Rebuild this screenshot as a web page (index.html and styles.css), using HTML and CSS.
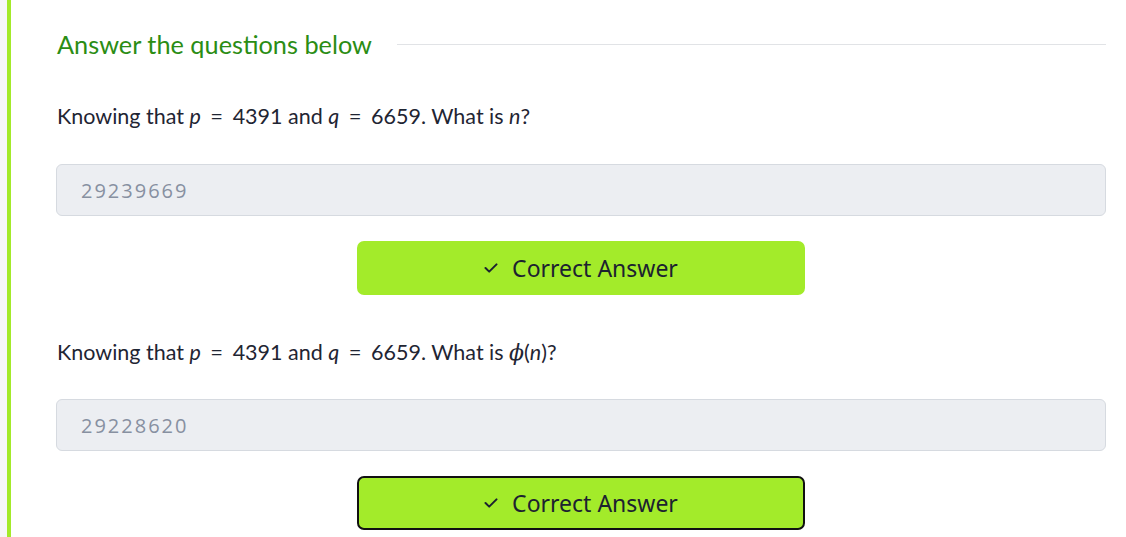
FILE: index.html
```html
<!DOCTYPE html>
<html>
<head>
<meta charset="utf-8">
<link rel="stylesheet" href="styles.css">
</head>
<body>
<div class="page">
  <div class="strip"></div>
  <div class="bar"></div>
  <main class="content">
    <div class="heading-row">
      <h2 class="heading">Answer the questions below</h2>
      <div class="rule"></div>
    </div>

    <section class="question">
      <p class="qtext">Knowing that <i class="m">p</i> <span class="eq">=</span> 4391 and <i class="m">q</i> <span class="eq">=</span> 6659. What is <i class="m">n</i>?</p>
      <div class="answer">29239669</div>
      <div class="btn-row">
        <button class="btn">
          <svg class="check" width="14" height="10" viewBox="0 0 14 10"><path d="M1.5 5 L5.2 8.6 L12.5 1.4" fill="none" stroke="#1c2230" stroke-width="2" stroke-linecap="round" stroke-linejoin="round"/></svg>
          <span>Correct Answer</span>
        </button>
      </div>
    </section>

    <section class="question q2">
      <p class="qtext">Knowing that <i class="m">p</i> <span class="eq">=</span> 4391 and <i class="m">q</i> <span class="eq">=</span> 6659. What is <i class="phi">ϕ</i>(<i class="m">n</i>)?</p>
      <div class="answer">29228620</div>
      <div class="btn-row">
        <button class="btn focused">
          <svg class="check" width="14" height="10" viewBox="0 0 14 10"><path d="M1.5 5 L5.2 8.6 L12.5 1.4" fill="none" stroke="#1c2230" stroke-width="2" stroke-linecap="round" stroke-linejoin="round"/></svg>
          <span>Correct Answer</span>
        </button>
      </div>
    </section>
  </main>
</div>
</body>
</html>
```

FILE: styles.css
```css
html, body {
  margin: 0;
  padding: 0;
  background: #ffffff;
}

body {
  font-family: "Lato", "Noto Sans", sans-serif;
  color: #1f2533;
}

.page {
  display: flex;
  min-height: 537px;
}

.strip {
  width: 7px;
  background: #f6f7f9;
  flex: none;
}

.bar {
  width: 4px;
  background: #a3ea2a;
  flex: none;
}

.content {
  flex: 1;
  padding: 26px 20px 0 45px;
}

.heading-row {
  display: flex;
  align-items: center;
  height: 36px;
  padding-left: 1px;
}

.heading {
  margin: 0;
  font-weight: 400;
  font-size: 25.3px;
  line-height: 36px;
  color: #2b8d14;
  white-space: nowrap;
}

.rule {
  flex: 1;
  height: 1px;
  background: #e1e3e6;
  margin-left: 25px;
}

.question {
  margin-top: 39px;
}

.q2 {
  margin-top: 42px;
}

.qtext {
  margin: 0 0 33px 0;
  padding-left: 1px;
  font-size: 21.5px;
  line-height: 30px;
  color: #1f2533;
  white-space: nowrap;
}

.q2 .qtext {
  margin-bottom: 31px;
}

.m {
  font-style: italic;
}

.eq {
  margin: 0 4px;
  font-size: 22px;
}

.phi {
  font-family: "DejaVu Serif", serif;
  font-style: italic;
  font-size: 22px;
}

.answer {
  box-sizing: border-box;
  height: 52px;
  background: #eceef2;
  border: 1px solid #d6dae0;
  border-radius: 6px;
  padding: 0 24px;
  display: flex;
  align-items: center;
  font-family: "Open Sans", "Noto Sans", sans-serif;
  font-size: 20px;
  letter-spacing: 2px;
  color: #8790a1;
}

.btn-row {
  display: flex;
  justify-content: center;
  margin-top: 25px;
}

.btn {
  box-sizing: border-box;
  width: 448px;
  height: 54px;
  background: #a3eb2a;
  border: 2px solid #a3eb2a;
  border-radius: 7px;
  display: flex;
  align-items: center;
  justify-content: center;
  gap: 14px;
  font-family: "Noto Sans", sans-serif;
  font-size: 23px;
  color: #1c2230;
  padding: 0 0 1px 0;
}

.btn.focused {
  border-color: #111111;
}

.check {
  flex: none;
}
```
